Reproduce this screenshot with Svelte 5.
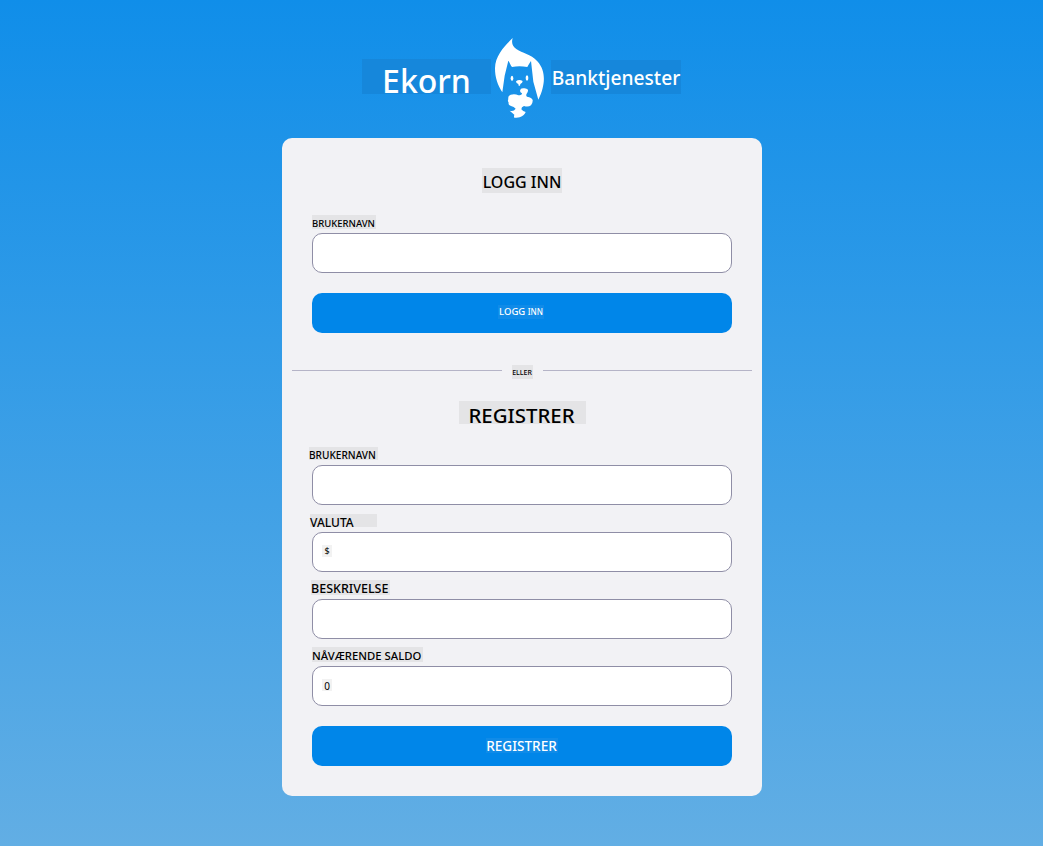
<script>
  let user = $state('');
  let newUser = $state('');
  let description = $state('');
</script>

<main>
  <header>
    <div class="patch ekorn"><span>Ekorn</span></div>
    <svg class="logo" viewBox="30 24 150 240" aria-hidden="true">
      <path fill="#fff" d="M83 24 C78 41 84 49 95 58 C111 70 137 72 157 94 C180 119 179 150 173 174 C170 188 165 199 160 209 L145 155 L138 93 C134 98 130 106 127 111 Q103 107 81 111 C77 106 74 97 70 92 L59 137 L52 187 C38 165 30 143 30 115 C31 75 59 48 83 24Z" />
      <ellipse cx="81" cy="145" rx="4" ry="8" fill="#fff" />
      <ellipse cx="126" cy="144" rx="4" ry="8" fill="#fff" />
      <path fill="#fff" d="M93 154 Q102 147 113 153 Q113 159 106 162 L105 167 H101 L100 162 Q93 160 93 154Z" />
      <path fill="#fff" d="M105 182 Q106 175 114 175 Q124 173 129 179 Q130 185 125 191 Q122 197 126 200 Q141 202 143 210 Q144 218 138 226 Q130 232 117 228 Q109 230 109 238 Q114 244 122 246 Q119 256 104 262 Q97 264 88 263 Q86 260 88 254 L74 242 Q86 246 92 236 Q87 230 78 228 Q69 225 71 218 Q67 211 70 208 Q68 197 77 194 Q91 191 100 196 Q111 196 111 190 Q105 187 105 182Z" />
    </svg>
    <div class="patch bank"><span>Banktjenester</span></div>
  </header>

  <section class="card">
    <form>
      <h2><span class="patch login-title"><span>LOGG INN</span></span></h2>
      <label>
        <span class="patch user"><span>BRUKERNAVN</span></span>
        <input bind:value={user} />
      </label>
      <button type="button"><span class="patch login"><span>LOGG <small>INN</small></span></span></button>
    </form>

    <div class="divider"><i></i><span class="patch or"><span>ELLER</span></span><i></i></div>

    <form>
      <h2 class="second"><span class="patch register-title"><span>REGISTRER</span></span></h2>
      <label>
        <span class="patch new-user"><span>BRUKERNAVN</span></span>
        <input bind:value={newUser} />
      </label>
      <label>
        <span class="patch currency"><span>VALUTA</span></span>
        <div class="box"><span class="patch value dollar"><span>$</span></span></div>
      </label>
      <label>
        <span class="patch description"><span>BESKRIVELSE</span></span>
        <input bind:value={description} />
      </label>
      <label>
        <span class="patch balance"><span>NÅVÆRENDE SALDO</span></span>
        <div class="box"><span class="patch value"><span>0</span></span></div>
      </label>
      <button type="button"><span class="patch register"><span>REGISTRER</span></span></button>
    </form>
  </section>
</main>

<style>
  :global(body) { margin: 0; }
  * { box-sizing: border-box; }
  main {
    height: 846px;
    background: linear-gradient(#108ee9, #62aee4);
    font-family: "Noto Sans", sans-serif;
    font-weight: 500;
    color: #000;
    overflow: hidden;
  }
  header {
    display: flex;
    justify-content: center;
    height: 138px;
    padding-top: 38px;
    color: #fff;
  }
  .logo { width: 50px; height: 80px; margin: 0 6px 0 4px; }
  .patch {
    display: flex;
    justify-content: center;
    background: #e4e4e6;
    white-space: nowrap;
  }
  .patch > span { display: block; }
  .ekorn { width: 129px; height: 35px; margin-top: 21px; background: #1687db; font-size: 32px; line-height: 43px; }
  .bank { width: 130px; height: 34px; margin-top: 22px; background: #1687db; font-size: 19.2px; line-height: 35px; }

  .card {
    width: 480px;
    height: 658px;
    margin: 0 auto;
    padding: 30px 10px;
    border-radius: 10px;
    background: #f2f2f5;
    position: relative;
    left: .5px;
  }
  form { padding: 0 20px; }
  h2 { display: flex; justify-content: center; margin: 0; height: 38px; font-weight: 500; }
  h2.second { height: 37px; }
  .login-title { width: 80px; height: 25px; font-size: 16px; line-height: 29px; }
  .register-title { width: 127px; height: 23px; font-size: 20.4px; line-height: 29px; margin-left: 1px; padding-right: 2px; }

  label { display: flex; flex-direction: column; align-items: flex-start; justify-content: flex-end; height: 67px; }
  label > .patch { justify-content: flex-start; margin-bottom: 4px; }
  .user { width: 64px; height: 14px; font-size: 9.5px; line-height: 17px; }
  label > .new-user { width: 69px; height: 13px; margin: 0 0 5px -3px; font-size: 10.1px; line-height: 16px; }
  label > .currency { width: 67px; height: 13px; margin: 0 0 5px -2px; font-size: 12px; line-height: 17px; }
  label > .description { width: 79px; height: 15px; margin-left: -1px; font-size: 12.5px; line-height: 18px; }
  .balance { width: 111px; height: 15px; font-size: 11.3px; line-height: 18px; }

  input, .box {
    display: flex;
    flex: none;
    align-items: center;
    width: 100%;
    height: 40px;
    padding: 0 10px;
    border: 1px solid #8f8ea6;
    border-radius: 10px;
    outline: 0;
    background: #fff;
    font: 10px "Noto Sans", sans-serif;
  }
  .value { width: 10px; height: 12px; margin: -2px 0 0 -1px; background: #f2f2f2; font-size: 10px; line-height: 14px; }
  .dollar { font-size: 9px; line-height: 12px; }
  button {
    display: flex;
    align-items: center;
    justify-content: center;
    width: 100%;
    height: 40px;
    margin: 20px 0 0;
    padding: 0;
    border: 0;
    border-radius: 10px;
    background: #0086e9;
    color: #fff;
    font-family: inherit;
    font-weight: 500;
  }
  button .patch { background: #108be8; }
  .login { width: 46px; height: 14px; margin: -3px 2px 0 0; font-size: 9.5px; line-height: 14px; }
  small { font-size: 8px; }
  .register { width: 72px; height: 15px; margin: -1px 1px 0 0; font-size: 13.6px; line-height: 16px; }

  .divider { display: flex; align-items: flex-start; height: 68px; padding-top: 32px; }
  .divider i { flex: 1; height: 1px; margin-top: 5px; background: #b5b4c7; }
  .or { width: 21px; height: 14px; margin: 0 10px; font-size: 7px; line-height: 16px; }
</style>
